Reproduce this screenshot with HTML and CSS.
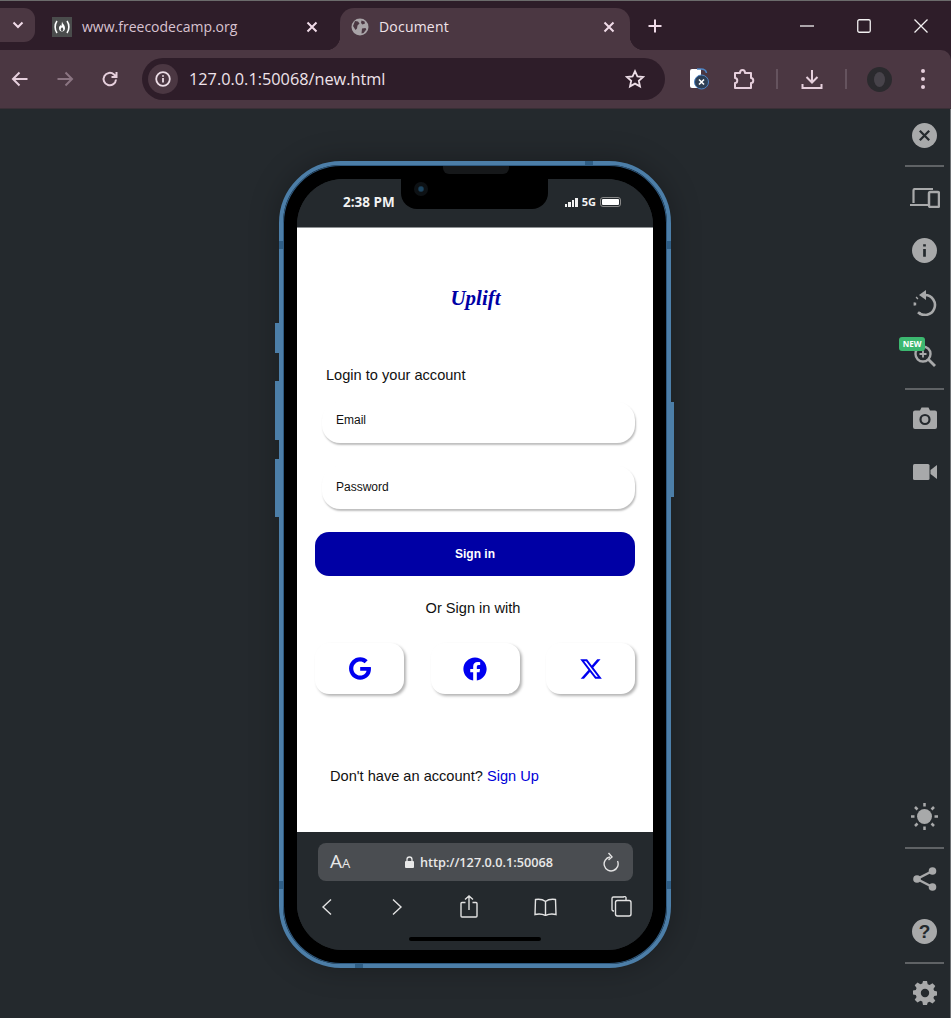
FILE: index.html
```html
<!DOCTYPE html>
<html lang="en">
<head>
<meta charset="utf-8">
<title>Document</title>
<link rel="stylesheet" href="styles.css">
</head>
<body>
<header class="chrome">
  <div class="tabstrip">
    <div class="tab-search"><svg width="12" height="8" viewBox="0 0 12 8"><path d="M1.500 1.500 6 6l4.500-4.500" class="st-light2"/></svg></div>
    <div class="tab">
      <svg class="favicon" width="20" height="20" viewBox="0 0 20 20"><rect width="20" height="20" fill="#4a4c4c"/><path d="M5 4C2.500 7.500 2.500 12.500 5 16M15 4c2.500 3.500 2.500 8.500 0 12" class="st-white"/><path d="M10 4.500c.5 2.500 3 3.500 3 6.500 0 2-1 3.500-3 3.500s-3-1.500-3-3.500c0-1.500 1-2 1.500-3 .5.500.7 1 .8 1.500.5-1.500.4-3 .7-5z" fill="#fff"/><path d="M10 10c.8 1 1.300 1.600 1.300 2.500 0 .9-.6 1.500-1.300 1.500s-1.300-.6-1.300-1.500c0-.9.8-1.500 1.300-2.500z" fill="#4a4c4c"/></svg>
      <span class="tab-title">www.freecodecamp.org</span>
      <svg class="tab-close" width="12" height="12" viewBox="0 0 12 12"><path d="M1.500 1.500l9 9m0-9l-9 9" class="st-light2"/></svg>
    </div>
    <div class="tab tab-active">
      <svg width="18" height="18" viewBox="0 0 18 18"><circle cx="9" cy="9" r="8.500" fill="#a9a4a8"/><path d="M4 3l3 .5 1.500 2-2 2-.5 3-1.500 1.500L2 8zM10.500 2.500l3 1 .5 2-2.500 1-1.500-1.500zM11 10.500l3.500-.5.8 1.500-2.800 3.500-2 .5z" fill="#4b3742"/></svg>
      <span class="tab-title tab-title-active">Document</span>
      <svg class="tab-close" width="12" height="12" viewBox="0 0 12 12"><path d="M1.500 1.500l9 9m0-9l-9 9" class="st-light2"/></svg>
    </div>
    <svg class="new-tab" width="14" height="14" viewBox="0 0 14 14"><path d="M7 .5v13M.5 7h13" class="st-light2"/></svg>
    <div class="win-controls">
      <svg width="14" height="14" viewBox="0 0 14 14"><path d="M0 7h14" class="st-thin"/></svg>
      <svg width="14" height="14" viewBox="0 0 14 14"><rect x=".75" y=".75" width="12.500" height="12.500" rx="1.500" class="st-thin"/></svg>
      <svg width="14" height="14" viewBox="0 0 14 14"><path d="M.5.5l13 13m0-13l-13 13" class="st-thin"/></svg>
    </div>
  </div>
  <div class="toolbar">
    <svg class="tb-back" width="18" height="16" viewBox="0 0 18 16"><path d="M16.500 8H2M8.500 1.500 2 8l6.500 6.500" class="st-icon"/></svg>
    <svg class="tb-fwd" width="18" height="16" viewBox="0 0 18 16"><path d="M1.500 8H16M9.500 1.500 16 8l-6.500 6.500" class="st-dim"/></svg>
    <svg class="tb-reload" width="18" height="18" viewBox="0 0 18 18"><path d="M15 9.500A6.200 6.200 0 1 1 13 4.500L15.500 7M15.500 2v5h-5" class="st-icon"/></svg>
    <div class="omnibox">
      <div class="info"><svg width="16" height="16" viewBox="0 0 16 16"><circle cx="8" cy="8" r="6.800" class="st-light"/><path d="M8 7v4.500M8 4.300v1.400" class="st-light"/></svg></div>
      <span class="url">127.0.0.1:50068/new.html</span>
      <svg class="star" width="20" height="20" viewBox="0 0 20 20"><path d="M10 2.200l2.400 5.200 5.600.6-4.200 3.800 1.200 5.600L10 14.600l-5 2.800 1.200-5.600L2 8l5.600-.6z" class="st-light"/></svg>
    </div>
    <svg class="tb-ext" width="20" height="22" viewBox="0 0 20 22"><path d="M1 3a2 2 0 0 1 2-2h9v19H3a2 2 0 0 1-2-2z" fill="#fff"/><path d="M8 1h4c3 0 5 1 5.500 4" fill="none" stroke="#4d84c4" stroke-width="1.500"/><circle cx="12.500" cy="14" r="7" fill="#2e3f55" stroke="#4d84c4"/><path d="M10 11.500l5 5m0-5l-5 5" class="st-white"/></svg>
    <svg class="tb-puzzle" width="22" height="22" viewBox="0 0 22 22"><path d="M2 5h5c0-4 5-4 5 0h6v5c3 0 3 5 0 5v5H2v-5c3 0 3-5 0-5z" class="st-icon st-round"/></svg>
    <span class="tb-sep"></span>
    <svg class="tb-dl" width="22" height="22" viewBox="0 0 22 22"><path d="M11 2v12M5.500 9l5.500 5.500L16.500 9M1.500 16v4h19v-4" class="st-icon"/></svg>
    <span class="tb-sep tb-sep2"></span>
    <div class="avatar"><span class="avatar-face"></span></div>
    <div class="menu-dots"><span></span><span></span><span></span></div>
  </div>
</header>

<main class="stage">
  <div class="phone">
    <span class="side side-a"></span><span class="side side-b"></span><span class="side side-c"></span><span class="side side-d"></span>
    <span class="band band-top"></span><span class="band band-bottom"></span>
    <span class="band-h band-hl1"></span><span class="band-h band-hr1"></span><span class="band-h band-hl2"></span><span class="band-h band-hr2"></span>
    <span class="earpiece"></span>
    <div class="screen">
      <div class="notch"><span class="camera"></span></div>
      <div class="statusbar">
        <span class="time">2:38 PM</span>
        <div class="status-right">
          <span class="signal"><i></i><i></i><i></i><i></i></span>
          <span class="net">5G</span>
          <span class="battery"><b></b></span>
        </div>
      </div>
      <section class="page">
        <h1 class="logo">Uplift</h1>
        <p class="login-title">Login to your account</p>
        <div class="field field-email">Email</div>
        <div class="field field-pass">Password</div>
        <button class="signin">Sign in</button>
        <p class="or">Or Sign in with</p>
        <div class="socials">
          <div class="social"><svg width="22" height="23" viewBox="0 0 488 512"><path fill="#0000f0" d="M488 261.800C488 403.300 391.100 504 248 504 110.800 504 0 393.200 0 256S110.800 8 248 8c66.800 0 123 24.500 166.300 64.900l-67.500 64.900C258.500 52.600 94.300 116.600 94.300 256c0 86.500 69.100 156.600 153.700 156.600 98.200 0 135-70.400 140.800-106.900H248v-85.300h236.100c2.300 12.700 3.900 24.900 3.900 41.400z"/></svg></div>
          <div class="social"><svg width="24" height="24" viewBox="0 0 512 512"><path fill="#0000f0" d="M504 256C504 119 393 8 256 8S8 119 8 256c0 123.780 90.690 226.380 209.250 245V327.690h-63V256h63v-54.640c0-62.150 37-96.480 93.670-96.480 27.140 0 55.520 4.840 55.520 4.840v61h-31.280c-30.800 0-40.410 19.120-40.410 38.730V256h68.780l-11 71.690h-57.780V501C413.310 482.380 504 379.780 504 256z"/></svg></div>
          <div class="social"><svg width="24" height="24" viewBox="0 0 512 512"><path fill="#0000f0" d="M389.200 48h70.600L305.600 224.200 487 464H345L233.700 318.600 106.500 464H35.800L200.700 275.500 26.800 48H172.400L272.900 180.900 389.200 48zM364.400 421.800h39.100L151.100 88h-42L364.400 421.800z"/></svg></div>
        </div>
        <p class="signup">Don't have an account? <a class="signup-link">Sign Up</a></p>
      </section>
      <div class="safari">
        <div class="safari-url">
          <span class="aa">A<small>A</small></span>
          <span class="safari-addr">
            <svg width="9" height="12" viewBox="0 0 9 12"><rect y="5" width="9" height="7" rx="1" fill="#e8e8e8"/><path d="M2 5.500V3.500a2.500 2.500 0 0 1 5 0v2" fill="none" stroke="#e8e8e8" stroke-width="1.300"/></svg>
            http://127.0.0.1:50068
          </span>
          <svg class="safari-reload" width="18" height="20" viewBox="0 0 18 20"><path d="M8 5A7 7 0 1 0 15.500 9" class="st-phone"/><path d="M6.500 1l3.500 4-3.500 3" class="st-phone"/></svg>
        </div>
        <div class="safari-nav">
          <svg width="12" height="18" viewBox="0 0 12 18"><path d="M10 1.500 2 9l8 7.500" class="st-phone"/></svg>
          <svg class="nav-forward" width="12" height="18" viewBox="0 0 12 18"><path d="M2 1.500 10 9l-8 7.500" class="st-phone"/></svg>
          <svg class="nav-share" width="18" height="23" viewBox="0 0 18 23"><path d="M5.500 7.500H2a1 1 0 0 0-1 1V21a1 1 0 0 0 1 1h14a1 1 0 0 0 1-1V8.500a1 1 0 0 0-1-1h-3.500M9 15V1M5 4.500 9 1l4 3.500" class="st-phone"/></svg>
          <svg class="nav-book" width="23" height="18" viewBox="0 0 23 18"><path d="M11.500 3.500C9 1.500 5 1 1.500 1.500L1 16.500c3.500-.8 7.500-.5 10.500 1 3-1.500 7-1.800 10.500-1l-.5-15C18 1 14 1.500 11.500 3.500zM11.500 3.500v14" class="st-phone"/></svg>
          <svg class="nav-tabs" width="21" height="21" viewBox="0 0 21 21"><path d="M3 15H2.500A1.500 1.500 0 0 1 1 13.500v-11A1.500 1.500 0 0 1 2.500 1h10A1.500 1.500 0 0 1 15 2.500V4" class="st-phone"/><rect x="4.500" y="4.500" width="15.500" height="15.500" rx="2" class="st-phone"/></svg>
        </div>
        <span class="home-bar"></span>
      </div>
    </div>
  </div>

  <aside class="sidebar">
    <div class="side-group">
      <div class="side-btn"><svg width="25" height="25" viewBox="0 0 24 24"><circle cx="12" cy="12" r="12" fill="#a8a9aa"/><path d="M7.500 7.500l9 9m0-9l-9 9" stroke="#24292d" stroke-width="2.200" fill="none"/></svg></div>
      <hr class="side-rule">
      <div class="side-btn"><svg width="30" height="20" viewBox="0 0 30 20"><path d="M3.500 15V2.500A1.500 1.500 0 0 1 5 1h18M0 17h19" stroke="#a8a9aa" stroke-width="2.200" fill="none"/><rect x="19" y="4" width="10" height="15" rx="1.500" stroke="#a8a9aa" stroke-width="2.500" fill="none"/></svg></div>
      <div class="side-btn"><svg width="25" height="25" viewBox="0 0 24 24"><circle cx="12" cy="12" r="12" fill="#a8a9aa"/><path d="M12 10.500V18M12 6v2.200" stroke="#24292d" stroke-width="2.600" fill="none"/></svg></div>
      <div class="side-btn side-btn-t"><svg width="24" height="26" viewBox="0 0 24 26"><path d="M12 5a10 10 0 1 1-7 17.200" stroke="#a8a9aa" stroke-width="2.600" fill="none"/><path d="M13 0v10L6 5z" fill="#a8a9aa"/><path d="M2 15.500a10 10 0 0 1 0-3M3.500 8.500l1-1M6.500 23.500l1 .5M11 25h1.500" stroke="#a8a9aa" stroke-width="2.600" fill="none"/></svg></div>
      <div class="side-btn side-btn-t">
        <svg width="22" height="22" viewBox="0 0 22 22"><circle cx="9" cy="9" r="7.500" stroke="#a8a9aa" stroke-width="2.400" fill="none"/><path d="M14.500 14.500 21 21" stroke="#a8a9aa" stroke-width="2.800" fill="none"/><path d="M9 5.500v7M5.500 9h7" stroke="#a8a9aa" stroke-width="1.800" fill="none"/></svg>
        <span class="new-badge">NEW</span>
      </div>
      <hr class="side-rule side-rule-2">
      <div class="side-btn side-btn-m"><svg width="24" height="22" viewBox="0 0 24 22"><path d="M2 3.500h5L8.500.5h7L17 3.500h5a2 2 0 0 1 2 2V20a2 2 0 0 1-2 2H2a2 2 0 0 1-2-2V5.500a2 2 0 0 1 2-2z" fill="#a8a9aa"/><circle cx="12" cy="12.500" r="4.500" fill="none" stroke="#24292d" stroke-width="2.200"/></svg></div>
      <div class="side-btn side-btn-m"><svg width="24" height="16" viewBox="0 0 24 16"><rect width="16.500" height="16" rx="1.500" fill="#a8a9aa"/><path d="M17.500 6 24 1v14l-6.500-5z" fill="#a8a9aa"/></svg></div>
    </div>
    <div class="side-group">
      <div class="side-btn"><svg width="27" height="27" viewBox="0 0 27 27"><circle cx="13.500" cy="13.500" r="7.500" fill="#a8a9aa"/><path d="M13.500 0v3.500M13.500 23.500V27M0 13.500h3.500M23.500 13.500H27M4 4l2.500 2.500M20.500 20.500 23 23M23 4l-2.500 2.500M6.500 20.500 4 23" stroke="#a8a9aa" stroke-width="2.500" fill="none"/></svg></div>
      <hr class="side-rule side-rule-b">
      <div class="side-btn"><svg width="26" height="26" viewBox="0 0 26 26"><path d="M20.500 5 5 13l15.500 8" stroke="#a8a9aa" stroke-width="2.400" fill="none"/><circle cx="20.500" cy="5" r="3.800" fill="#a8a9aa"/><circle cx="5" cy="13" r="3.800" fill="#a8a9aa"/><circle cx="20.500" cy="21" r="3.800" fill="#a8a9aa"/></svg></div>
      <div class="side-btn"><span class="help">?</span></div>
      <hr class="side-rule side-rule-b">
      <div class="side-btn side-btn-last"><svg width="24" height="24" viewBox="0 0 24 24"><path fill="#a8a9aa" fill-rule="evenodd" d="M10 0h4l.7 3.300 1.900.8L19.500 2.200l2.800 2.800-1.900 2.900.8 1.900L24 10.500v4l-2.800.6-.8 1.900 1.900 2.800-2.800 2.800-2.900-1.900-1.900.8L14 24h-4l-.7-3.500-1.900-.8-2.900 1.900L1.700 18.800l1.900-2.800-.8-1.900L0 13.500v-4l2.800-.6.8-1.900L1.700 4.200 4.500 1.400l2.900 1.900 1.900-.8zM12 7.800a4.200 4.200 0 1 0 0 8.400 4.200 4.200 0 0 0 0-8.400z"/></svg></div>
    </div>
  </aside>
</main>
</body>
</html>
```
FILE: styles.css
```css
* { box-sizing: border-box; }
html, body { margin: 0; height: 100%; }
body {
  width: 951px; height: 1018px; overflow: hidden;
  background: #24292d;
  display: flex; flex-direction: column;
  font-family: "Liberation Sans", Arial, sans-serif;
}
svg { display: block; flex: none; }
.st-light2, .st-white, .st-thin, .st-icon, .st-dim, .st-light, .st-phone { fill: none; }
.st-light2 { stroke: #f0dbe8; stroke-width: 2; }
.st-white { stroke: #fff; stroke-width: 1.600; }
.st-thin { stroke: #f2f0f1; stroke-width: 1.300; }
.st-icon { stroke: #e6cfdc; stroke-width: 2; }
.st-round { stroke-linejoin: round; }
.st-dim { stroke: #8b7582; stroke-width: 2; }
.st-light { stroke: #ecdde6; stroke-width: 1.800; }
.st-phone { stroke: #e2e2e2; stroke-width: 1.400; }

/* browser chrome */
.chrome { flex: none; height: 109px; background: #2e1d29; border-bottom: 1px solid #3a2f36; }
.tabstrip {
  height: 50px; display: flex; align-items: flex-start;
  background: #2e1d29; border-top: 1px solid #6b6b6b;
  font-family: "Open Sans", "Noto Sans", sans-serif; font-size: 14px;
}
.tab-search {
  width: 35px; height: 34px; margin-top: 7px;
  background: #4b3742; border-radius: 0 11px 11px 0;
  display: flex; align-items: center; justify-content: center;
}
.tab { height: 42px; margin-top: 7px; padding-bottom: 5px; display: flex; align-items: center; position: relative; }
.tab:not(.tab-active) { width: 305px; padding-left: 17px; }
.tab-title { margin: -1px 0 0 10px; color: #d9c3d1; white-space: nowrap; }
.tab-close { margin: 0 0 0 auto; }
.tab:not(.tab-active) .tab-close { margin-right: 22px; }
.tab-active {
  width: 290px; padding-left: 11px; background: #4b3742; border-radius: 14px 14px 0 0;
}
.tab-active::before, .tab-active::after {
  content: ""; position: absolute; bottom: 0; width: 14px; height: 14px;
}
.tab-active::before { right: 100%; background: radial-gradient(circle at 0 0, transparent 14px, #4b3742 14.5px); }
.tab-active::after { left: 100%; background: radial-gradient(circle at 100% 0, transparent 14px, #4b3742 14.5px); }
.tab-title-active { color: #f0e4ea; letter-spacing: .2px; }
.tab-active .tab-close { margin-right: 15px; }
.new-tab { margin: 18px 0 0 18px; }
.win-controls { margin-left: auto; margin-top: 18px; display: flex; gap: 43px; padding-right: 23px; }

.toolbar {
  height: 58px; background: #4b3742; border-radius: 0 10px 0 0;
  display: flex; align-items: center; position: relative;
}
.tb-back { margin: 0 0 0 11px; }
.tb-fwd { margin-left: 27px; }
.tb-reload { margin-left: 27px; }
.omnibox {
  width: 523px; height: 42px; margin-left: 23px;
  background: #2e1d29; border-radius: 21px;
  display: flex; align-items: center; padding-left: 6px;
}
.info {
  width: 30px; height: 30px; border-radius: 50%; background: #4b3742;
  display: flex; align-items: center; justify-content: center;
}
.url { margin-left: 11px; font-family: "Open Sans", "Noto Sans", sans-serif; font-size: 16.300px; color: #efe3ea; white-space: nowrap; }
.star { margin: 0 20px 0 auto; }
.tb-ext { margin-left: 24px; }
.tb-puzzle { margin-left: 24px; }
.tb-sep { width: 2px; height: 20px; background: #65535e; margin-left: 21px; }
.tb-sep2 { margin-left: 22px; }
.tb-dl { margin-left: 23px; }
.avatar {
  width: 25px; height: 25px; margin-left: 20px; border-radius: 50%;
  background: #2b2a2e; display: flex; align-items: center; justify-content: center;
}
.avatar-face { width: 11px; height: 15px; border-radius: 50%; background: #47434a; }
.menu-dots { margin-left: 29px; display: flex; flex-direction: column; gap: 4px; }
.menu-dots span { width: 4px; height: 4px; border-radius: 50%; background: #e6cfdc; }

/* stage */
.stage { flex: 1; display: flex; align-items: flex-start; min-height: 0; padding-left: 279px; }
.phone {
  position: relative; width: 392px; height: 807px; margin-top: 52px;
  border: 4px solid #4c7ea8; border-radius: 62px; background: #000; padding: 14px;
  box-shadow: 0 0 30px rgba(0,0,0,.28), inset 0 0 0 1px #2f5a80;
}
.side, .band, .band-h, .earpiece { position: absolute; }
.side { background: #4c7ea8; width: 4px; }
.side-a { left: -8px; top: 158px; height: 30px; }
.side-b { left: -8px; top: 216px; height: 59px; }
.side-c { left: -8px; top: 294px; height: 58px; }
.side-d { right: -7px; top: 237px; height: 95px; width: 3px; }
.band { width: 8px; height: 4px; background: #2f5e85; }
.band-top { top: -4px; left: 302px; }
.band-bottom { bottom: -4px; left: 72px; }
.band-h { width: 4px; height: 8px; background: #2f5e85; }
.band-hl1 { left: -4px; top: 76px; }
.band-hr1 { right: -4px; top: 76px; }
.band-hl2 { left: -4px; top: 716px; }
.band-hr2 { right: -4px; top: 716px; }
.earpiece { left: 160px; top: 1px; width: 66px; height: 8px; background: #16181a; border-radius: 0 0 6px 6px; z-index: 2; }

.screen {
  position: relative; width: 356px; height: 771px; border-radius: 46px;
  overflow: hidden; display: flex; flex-direction: column; background: #24292d;
}
.notch {
  position: absolute; left: 104px; top: 0; width: 147px; height: 30px; z-index: 1;
  background: #000; border-radius: 0 0 16px 16px;
}
.camera { position: absolute; left: 13px; top: 3px; width: 14px; height: 14px; border-radius: 50%; background: radial-gradient(circle, #1d4560 0 2px, #0d1114 3.500px); }
.statusbar {
  height: 49px; flex: none; background: #24292d; border-bottom: 1px solid #8f9294;
  position: relative; display: flex; align-items: flex-end; justify-content: space-between;
  padding: 0 32px 18px 46px; color: #f2f2f2;
  font-family: "Open Sans", "Noto Sans", sans-serif; font-weight: 700;
}
.time { font-size: 13.500px; line-height: 14px; white-space: nowrap; }
.status-right { display: flex; align-items: center; gap: 4px; margin-bottom: 1px; }
.signal { display: flex; align-items: flex-end; gap: 1px; height: 9px; }
.signal i { width: 2.500px; background: #f2f2f2; }
.signal i:nth-child(1) { height: 3px; }
.signal i:nth-child(2) { height: 5px; }
.signal i:nth-child(3) { height: 7px; }
.signal i:nth-child(4) { height: 9px; }
.net { font-size: 11px; line-height: 12px; }
.battery { width: 21px; height: 10px; border: 1px solid #888; border-radius: 3px; padding: 1px; display: block; }
.battery b { display: block; width: 100%; height: 100%; background: #fff; border-radius: 1px; }

/* page */
.page { flex: none; height: 604px; background: #fff; position: relative; display: flex; flex-direction: column; color: #111; padding: 0 18px; font-size: 14.600px; }
.page p { margin: 0; }
.logo {
  margin: 56px 0 0; align-self: center; padding-left: 1px;
  font: italic 700 21px/28px "Liberation Serif", serif; color: #0000a5;
}
.login-title { margin: 54px 0 0 11px !important; line-height: 18px; }
.field {
  margin-left: 7px; width: 313px; padding-left: 14px;
  background: #fff; border-radius: 18px;
  box-shadow: 1px 2px 2px rgba(0,0,0,.26);
  display: flex; align-items: center; font-size: 12px; color: #111;
}
.field-email { height: 41px; margin-top: 18px; padding-bottom: 6px; }
.field-pass { height: 43px; margin-top: 23px; padding-bottom: 2px; }
.signin {
  margin-top: 23px; width: 320px; height: 44px; padding: 0; border: 0;
  background: #0000a5; color: #fff; border-radius: 14px;
  font: 700 12px "Liberation Sans", Arial, sans-serif;
}
.or { margin-top: 23px !important; text-align: center; line-height: 18px; padding-right: 4px; }
.socials { display: flex; justify-content: space-between; width: 320px; margin-top: 26px; }
.social {
  width: 89px; height: 51px; background: #fff; border-radius: 14px;
  box-shadow: 2px 2px 3px rgba(0,0,0,.3);
  display: flex; align-items: center; justify-content: center;
}
.signup { margin: 73px 0 0 15px !important; line-height: 18px; }
.signup-link { color: #0000d8; }

/* safari */
.safari { flex: 1; background: #24292d; position: relative; padding: 11px 20px 0 21px; }
.safari-url {
  height: 38px; background: #4a4d51; border-radius: 8px;
  display: flex; align-items: center; padding: 0 13px 0 12px; color: #e8e8e8;
}
.aa { font: 400 19px/20px "Open Sans", sans-serif; width: 75px; }
.aa small { font-size: 13px; }
.safari-addr {
  display: flex; align-items: center; gap: 6px; white-space: nowrap;
  font: 600 12.700px "Open Sans", "Noto Sans", sans-serif;
}
.safari-reload { margin-left: auto; }
.safari-nav { display: flex; align-items: center; margin: 14px 0 0 3px; }
.nav-forward { margin-left: 58px; }
.nav-share { margin-left: 57px; }
.nav-book { margin-left: 56px; }
.nav-tabs { margin-left: 54px; }
.home-bar { position: absolute; left: 112px; top: 105px; width: 132px; height: 4px; border-radius: 2px; background: #000; }

/* sidebar */
.sidebar {
  margin-left: auto; width: 51px; height: 909px; align-self: stretch;
  display: flex; flex-direction: column; justify-content: space-between;
  border-right: 1px solid #6e7174; padding-left: 5px; padding-right: 6px;
}
.side-group { display: flex; flex-direction: column; }
.side-btn { height: 52px; display: flex; align-items: center; justify-content: center; position: relative; }
.side-btn-t { height: 53px; }
.side-btn-m { height: 54px; }
.side-btn-last { height: 50px; }
.side-rule { width: 39px; height: 2px; margin: 4px 0 5px; border: 0; background: #5f6265; }
.side-rule-2 { margin: 6px 0 1px; }
.side-rule-b { margin: 5px 0 4px; }
.new-badge {
  position: absolute; left: -6px; top: 8px; width: 26px; height: 14px; border-radius: 3px;
  background: #3cb870; color: #fff; font: 700 8px/14px "Open Sans", sans-serif; text-align: center;
}
.help {
  width: 25px; height: 25px; border-radius: 50%; background: #a8a9aa; color: #24292d;
  font: 700 19px/25px "Liberation Sans", sans-serif; text-align: center;
}
```
